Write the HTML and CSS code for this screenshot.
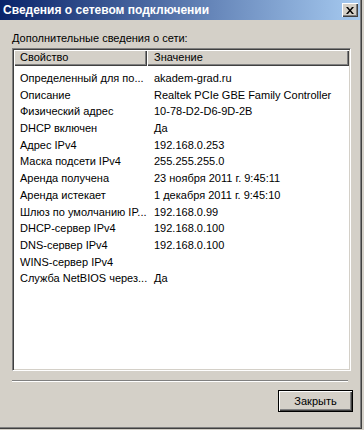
FILE: index.html
```html
<!DOCTYPE html>
<html lang="ru">
<head>
  <meta charset="UTF-8" />
  <title>Сведения о сетевом подключении</title>
  <link rel="stylesheet" href="styles.css">
</head>
<body>

<div class="window">
  <div class="titlebar">
    <span class="title">Сведения о сетевом подключении</span>
    <button class="close" aria-label="Закрыть">
      <svg width="8" height="7" viewBox="0 0 8 7">
        <path d="M0 0h2l2 2.5L6 0h2L5 3.5 8 7H6L4 4.5 2 7H0l3-3.5z" fill="#000"/>
      </svg>
    </button>
  </div>

  <div class="content">
    <p class="caption">Дополнительные сведения о сети:</p>

    <div class="listview">
      <div class="lv-head">
        <div class="hcell col-prop">Свойство</div>
        <div class="hcell col-val">Значение</div>
      </div>
      <div class="lv-body">
        <div class="row"><span class="col-prop">Определенный для по...</span><span class="col-val">akadem-grad.ru</span></div>
        <div class="row"><span class="col-prop">Описание</span><span class="col-val">Realtek PCIe GBE Family Controller</span></div>
        <div class="row"><span class="col-prop">Физический адрес</span><span class="col-val">10-78-D2-D6-9D-2B</span></div>
        <div class="row"><span class="col-prop">DHCP включен</span><span class="col-val">Да</span></div>
        <div class="row"><span class="col-prop">Адрес IPv4</span><span class="col-val">192.168.0.253</span></div>
        <div class="row"><span class="col-prop">Маска подсети IPv4</span><span class="col-val">255.255.255.0</span></div>
        <div class="row"><span class="col-prop">Аренда получена</span><span class="col-val">23 ноября 2011 г. 9:45:11</span></div>
        <div class="row"><span class="col-prop">Аренда истекает</span><span class="col-val">1 декабря 2011 г. 9:45:10</span></div>
        <div class="row"><span class="col-prop">Шлюз по умолчанию IP...</span><span class="col-val">192.168.0.99</span></div>
        <div class="row"><span class="col-prop">DHCP-сервер IPv4</span><span class="col-val">192.168.0.100</span></div>
        <div class="row"><span class="col-prop">DNS-сервер IPv4</span><span class="col-val">192.168.0.100</span></div>
        <div class="row"><span class="col-prop">WINS-сервер IPv4</span><span class="col-val"></span></div>
        <div class="row"><span class="col-prop">Служба NetBIOS через...</span><span class="col-val">Да</span></div>
      </div>
    </div>

    <div class="separator"></div>

    <div class="actions">
      <button class="btn-default">Закрыть</button>
    </div>
  </div>
</div>

</body>
</html>
```

FILE: styles.css
```css
    html, body {
      margin: 0; padding: 0;
      background: #d4d0c8;
    }
    body {
      font-family: "Liberation Sans", Arial, sans-serif;
      font-size: 11px;
      color: #000;
      width: 364px;
      height: 430px;
      overflow: hidden;
    }
    .window {
      box-sizing: border-box;
      width: 362px;
      height: 429px;
      background: #d4d0c8;
      border-right: 1px solid #404040;
      border-bottom: 1px solid #404040;
      box-shadow: inset -1px -1px 0 #808080;
      display: flex;
      flex-direction: column;
    }
    .titlebar {
      height: 20px;
      background: linear-gradient(to right, #0a246a, #a6caf0);
      display: flex;
      align-items: center;
      justify-content: space-between;
      padding: 0 2px 0 3px;
      margin-right: 1px;
    }
    .title {
      color: #fff;
      font-weight: bold;
      font-size: 12px;
      white-space: nowrap;
    }
    .close {
      width: 16px;
      height: 14px;
      padding: 0;
      border: none;
      background: #d4d0c8;
      box-shadow: inset 1px 1px 0 #fff, inset -1px -1px 0 #404040, inset -2px -2px 0 #808080;
      display: flex;
      align-items: center;
      justify-content: center;
    }
    .content {
      flex: 1;
      padding: 11px 8px 0 12px;
      display: flex;
      flex-direction: column;
    }
    .caption {
      margin: 0 0 3px;
      line-height: 14px;
    }
    .listview {
      box-sizing: border-box;
      width: 339px;
      height: 323px;
      background: #fff;
      border-top: 1px solid #808080;
      border-left: 1px solid #808080;
      border-right: 1px solid #fff;
      border-bottom: 1px solid #fff;
      box-shadow: inset 1px 1px 0 #404040, inset -1px -1px 0 #d4d0c8;
      padding: 1px;
    }
    .lv-head {
      display: flex;
      height: 16px;
    }
    .hcell {
      box-sizing: border-box;
      background: #d4d0c8;
      line-height: 15px;
      box-shadow: inset 1px 1px 0 #fff, inset -1px -1px 0 #404040, inset -2px -2px 0 #808080;
    }
    .col-prop {
      box-sizing: border-box;
      width: 133px;
      padding-left: 6px;
      flex: none;
      white-space: nowrap;
    }
    .col-val {
      box-sizing: border-box;
      flex: 1;
      padding-left: 7px;
      white-space: nowrap;
    }
    .lv-body {
      padding-top: 4px;
    }
    .row {
      display: flex;
      height: 16.7px;
      line-height: 16px;
    }
    .separator {
      width: 336px;
      height: 0;
      margin-top: 9px;
      border-top: 1px solid #808080;
      border-bottom: 1px solid #fff;
    }
    .actions {
      display: flex;
      justify-content: flex-end;
      margin-top: 8px;
    }
    .btn-default {
      width: 75px;
      height: 22px;
      padding: 0;
      font-family: inherit;
      font-size: 11px;
      color: #000;
      background: #d4d0c8;
      border: 1px solid #000;
      box-shadow: inset 1px 1px 0 #fff, inset -1px -1px 0 #404040, inset -2px -2px 0 #808080;
    }
```
